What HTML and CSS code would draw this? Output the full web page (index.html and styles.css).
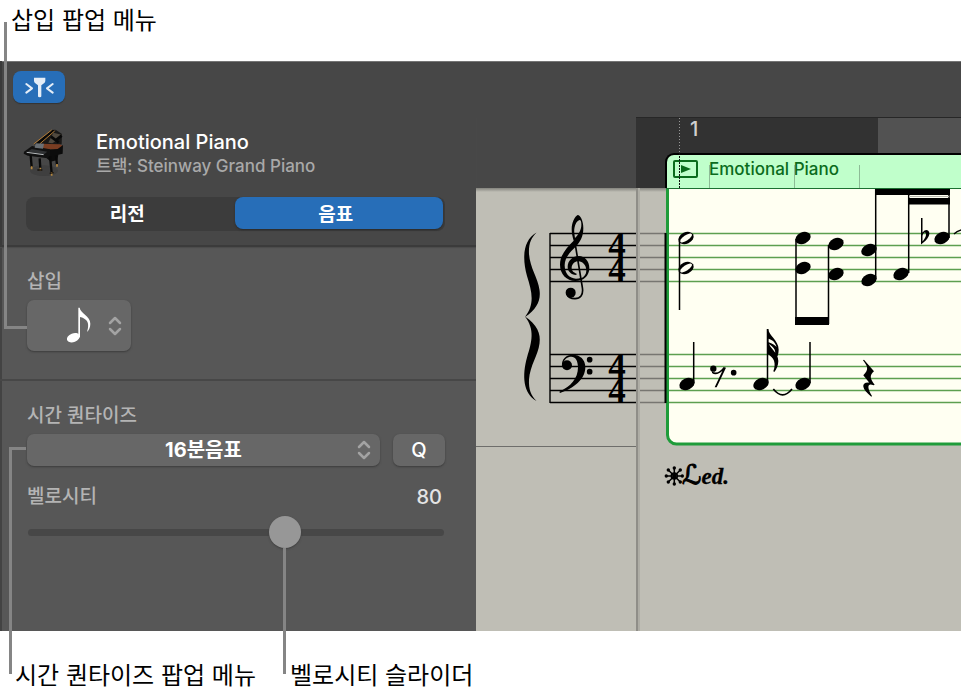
FILE: index.html
```html
<!DOCTYPE html>
<html lang="ko">
<head>
    <meta charset="UTF-8">
    <meta name="viewport" content="width=device-width, initial-scale=1.0">
    <title>악보 편집기</title>
    <link rel="stylesheet" href="styles.css">
</head>
<body>
    <div class="figure">
        <p class="caption caption-top">삽입 팝업 메뉴</p>

        <main class="app">
            <div class="toolbar">
                <button class="catch" type="button" aria-label="재생헤드 캐치">
                    <svg width="30" height="22" viewBox="0 0 90 66" fill="none" stroke="#e4edf7" stroke-width="6" stroke-linecap="round" stroke-linejoin="round">
                        <path d="M7 24l17 13-17 13M86 24L69 37l17 13"/>
                        <path d="M30 5h34v9q0 5-4 8l-8 6v33q0 3-5 3t-5-3V28l-8-6q-4-3-4-8z" fill="#e4edf7" stroke="none"/>
                    </svg>
                </button>
            </div>

            <section class="inspector">
                <div class="head">
                    <div class="track">
                        <svg class="piano" width="44" height="48" viewBox="66 387 132 144">
                            <ellipse cx="132" cy="512" rx="42" ry="16" fill="#3f3f3f"/>
                            <path d="M104 435l64-45 18 12-1 31-40 8z" fill="#191817"/>
                            <path d="M103 433l52-43 12-1-48 43z" fill="#090909"/>
                            <path d="M101 432l54-42M119 432l45-39" stroke="#b37b35" stroke-width="3"/>
                            <path d="M160 398l25 6-4 10-24 16-12-2z" fill="#50493f"/>
                            <path d="M153 410l23 17M185 407l-19 15" stroke="#080808" stroke-width="8"/>
                            <path d="M121 431l58 2 10 5-14 12-45-2z" fill="#7a3d22"/>
                            <path d="M133 449l40-2 16-12-1 26-13 3-3 16-20 5-19-17z" fill="#0c0c0c"/>
                            <path d="M72 455l24-17 54 10 1 18-8 9-60-8-12-6z" fill="#111"/>
                            <path d="M83 455l12-8 47 8-10 8z" fill="#303234"/>
                            <path d="M80 457l51 7" stroke="#b8bcbe" stroke-width="3"/>
                            <path d="M107 430l25 1-3 15-25-3z" fill="#6a7075"/>
                            <path d="M92 466l3 35M119 475l2 31M150 470l5 49M168 466l3 29" stroke="#090909" stroke-width="7"/>
                            <path d="M95 499v9M121 503v9M155 516v11M171 492v8" stroke="#b6873d" stroke-width="5"/>
                            <path d="M112 510h15M149 520l12-2" stroke="#17130e" stroke-width="4"/>
                        </svg>
                        <div>
                            <h1 class="track-title">Emotional Piano</h1>
                            <p class="track-sub">트랙: Steinway Grand Piano</p>
                        </div>
                    </div>
                    <div class="tabs">
                        <button class="tab" type="button">리전</button>
                        <button class="tab active" type="button">음표</button>
                    </div>
                </div>

                <div class="group">
                    <label class="label" for="insert">삽입</label>
                    <div class="popup popup-insert">
                        <select id="insert">
                            <option value="8" selected></option>
                        </select>
                        <svg class="popup-note" width="24" height="36" viewBox="0 0 72 108" fill="#fff">
                            <ellipse cx="19" cy="92" rx="20" ry="13" transform="rotate(-22 19 92)"/>
                            <path d="M34 2h4c2 17 32 25 32 48 0 10-4 20-10 25 5-15 6-31-6-38-6-5-12-7-15-7v61h-5z"/>
                        </svg>
                        <svg class="arrows" width="14" height="20" viewBox="0 0 14 20"><path d="M2 7l5-5 5 5M2 13l5 5 5-5"/></svg>
                    </div>
                </div>

                <div class="group group-last">
                    <label class="label" for="quantize">시간 퀀타이즈</label>
                    <div class="row">
                        <div class="popup popup-quantize">
                            <select id="quantize">
                                <option>16분음표</option>
                            </select>
                            <svg class="arrows" width="14" height="20" viewBox="0 0 14 20"><path d="M2 7l5-5 5 5M2 13l5 5 5-5"/></svg>
                        </div>
                        <button class="q" type="button">Q</button>
                    </div>
                    <div class="velocity">
                        <label class="label" for="velocity">벨로시티</label>
                        <output class="value" for="velocity">80</output>
                    </div>
                    <input class="slider" id="velocity" type="range" min="1" max="127" value="80">
                </div>
            </section>

            <section class="editor">
                <div class="timeline">
                    <div class="ruler">
                        <div class="bars">
                            <span class="bar">1</span>
                            <span class="bar-rest"></span>
                        </div>
                        <div class="region-head">
                            <svg width="26" height="20" viewBox="0 0 26 20">
                                <rect x="1" y="2" width="23" height="16" rx="1" fill="none" stroke="#0b6b1c" stroke-width="2"/>
                                <path d="M8 6l10 4-10 4z" fill="#0b6b1c"/>
                            </svg>
                            <span>Emotional Piano</span>
                            <i class="tick tick-1"></i>
                            <i class="tick tick-2"></i>
                            <i class="tick tick-3"></i>
                        </div>
                        <i class="playhead"></i>
                    </div>
                </div>

                <svg class="score" width="100%" height="443">
                    <defs>
                        <ellipse id="head" rx="8" ry="5.800" transform="rotate(-25)"/>
                        <g id="half">
                            <use href="#head"/>
                            <ellipse rx="7" ry="2.600" transform="rotate(-33)" fill="#fffff2"/>
                        </g>
                        <path id="brace" d="M60.500 44.500C47 52 46 70 51 88 56 104 59 116 49 129 61 121 65 112 63.500 102 62 90 54 80 53 66 52.500 56 55 50 60.500 44.500z"/>
                        <linearGradient id="shade" x2="0" y2="1">
                            <stop offset="0" stop-color="#83837d"/>
                            <stop offset="1" stop-color="#bfbeb5"/>
                        </linearGradient>
                    </defs>

                    <rect width="100%" height="4" fill="url(#shade)"/>

                    <!-- divider between the staff rows -->
                    <path d="M0 258.500h160" stroke="#6e6e6b"/>

                    <!-- brace, clefs and meter -->
                    <use href="#brace"/>
                    <use href="#brace" transform="matrix(1 0 0 -1 0 257.400)"/>
                    <path d="M74 45.500h86M74 57.500h86M74 69.500h86M74 81.500h86M74 93.500h86M74 166.500h86M74 178.500h86M74 190.500h86M74 202.500h86M74 214.500h86M74 45v170" stroke="#000" stroke-width="1.400"/>
                    <g transform="translate(64 12) scale(.3333)">
                        <path fill-rule="evenodd" d="M113 45C121 45 130 62 130 84 130 108 122 124 109 138 92 155 74 172 74 196 74 220 88 236 108 236 114 236 119 235 123 233L124 240C118 242 112 243 106 243 80 243 60 222 60 194 60 166 78 145 101 122 97 110 95 98 95 88 95 66 105 49 113 45zM119 60C109 62 101 80 103 100L105 114C116 104 125 88 124 72 124 64 122 60 119 60z"/>
                        <path d="M124 240C140 234 148 220 148 204 148 184 134 168 117 168 98 168 83 182 83 201 83 213 92 224 109 225L110 221C100 218 94 211 95 202 96 192 104 184 115 184 128 184 139 196 139 212 139 222 133 231 122 235z"/>
                        <path d="M104 122L127 262C131 286 120 296 105 296 94 296 84 291 81 282" fill="none" stroke="#000" stroke-width="5"/>
                        <circle cx="92" cy="278" r="15"/>
                    </g>
                    <g transform="translate(64 152) scale(.3333)">
                        <path d="M66 78C64 58 78 44 98 44 120 44 136 58 136 82 136 118 100 146 60 159L58 155C92 140 114 116 114 82 114 62 106 50 94 50 82 50 72 58 71 68z"/>
                        <circle cx="81" cy="76" r="15"/>
                        <circle cx="149" cy="59" r="8.500"/>
                        <circle cx="149" cy="95" r="8.500"/>
                    </g>
                    <text class="meter"><tspan x="141" y="69">4</tspan><tspan x="141" y="93">4</tspan></text>
                    <text class="meter"><tspan x="141" y="190">4</tspan><tspan x="141" y="214">4</tspan></text>

                    <!-- lead-in before bar 1 -->
                    <path d="M161 45.500h29M161 57.500h29M161 69.500h29M161 81.500h29M161 93.500h29M161 166.500h29M161 178.500h29M161 190.500h29M161 202.500h29M161 214.500h29" stroke="#777671" stroke-width="1.400"/>
                    <rect x="160" width="2" height="443" fill="#8f8e88"/>
                    <rect x="162" width="2" height="443" fill="#aeada5"/>

                    <!-- region -->
                    <rect class="region" x="191.500" y="-20" width="110%" height="276" rx="9"/>
                    <svg x="193" y="0" width="100%" height="240" overflow="hidden">
                        <path class="staff" d="M0 45.500h3000M0 57.500h3000M0 69.500h3000M0 81.500h3000M0 93.500h3000M0 166.500h3000M0 178.500h3000M0 190.500h3000M0 202.500h3000M0 214.500h3000"/>
                    </svg>
                    <path d="M190 .5h3000" stroke="#1b7030"/>
                    <path d="M189.500 45v170" stroke="#000" stroke-width="2"/>

                    <!-- upper voice -->
                    <use href="#half" x="210" y="50"/>
                    <use href="#half" x="210" y="80"/>
                    <use href="#head" x="327" y="50"/>
                    <use href="#head" x="327" y="80"/>
                    <use href="#head" x="360" y="56"/>
                    <use href="#head" x="360" y="86"/>
                    <use href="#head" x="393" y="62"/>
                    <use href="#head" x="393" y="92"/>
                    <use href="#head" x="425" y="86"/>
                    <use href="#head" x="466" y="50"/>
                    <path d="M203.500 51v71M320 51v85M352.500 57v79M399.700 1v90M432.700 1v84M473 1v49" stroke="#000" stroke-width="1.500"/>
                    <path d="M319 129h34v8h-34zM399 1h75v6h-75zM432 10h42v6.500h-42z"/>
                    <path d="M433 8.500h40" stroke="#b9b9b0"/>
                    <path fill-rule="evenodd" d="M445 30h1.500v14.500q3-3.500 5.500-2c3.500 3 0 9-7 14zM446.500 48v5.500c3.500-4 4.500-8 2.500-9q-2 0-2.500 3.500z"/>
                    <path d="M478 46q4-4 12-5" fill="none" stroke="#000" stroke-width="1.500"/>

                    <!-- lower voice -->
                    <use href="#head" x="211" y="196"/>
                    <use href="#head" x="285" y="196"/>
                    <use href="#head" x="327" y="196"/>
                    <path d="M217.700 154v41M291.500 141v54M334 154v41" stroke="#000" stroke-width="1.500"/>
                    <g transform="translate(184 122) scale(.3333)">
                        <circle cx="160" cy="176" r="9.500"/>
                        <path d="M156 184c12 8 25 2 35-13l7 2-28 59h-6l23-49c-10 9-22 13-31 6z"/>
                        <circle cx="221" cy="188" r="8.500"/>
                        <path d="M321 57h4c1 20 31 34 31 62 0 12-4 25-11 31l-4-1c11-24 4-38-20-50zM321 95h4c2 19 30 32 30 58 0 12-5 25-12 33l-3-2c9-25 3-42-19-53z"/>
                        <path d="M326 86c15 5 20 13 24 25-7-7-13-10-24-14z" fill="#fffff2"/>
                        <path d="M340 237q28 35 56 0" fill="none" stroke="#000" stroke-width="5"/>
                        <path d="M609 151l3-2 30 35c-14 13-12 22 2 40l-3 2c-16-8-23 2-5 32l-2 2c-30-23-32-44-6-42l-18-22c17-17 14-26-1-45z"/>
                    </g>

                    <!-- pedal mark -->
                    <g transform="translate(198.300 288)" stroke="#000" stroke-width="1.500">
                        <path d="M-8 0H8M0-8V8M-6-6L6 6M-6 6L6-6"/>
                        <circle r="3" fill="none"/>
                        <g stroke="none">
                            <circle cx="-8" r="1.700"/><circle cx="8" r="1.700"/><circle cy="-8" r="1.700"/><circle cy="8" r="1.700"/>
                            <circle cx="-6" cy="-6" r="1.700"/><circle cx="6" cy="6" r="1.700"/><circle cx="-6" cy="6" r="1.700"/><circle cx="6" cy="-6" r="1.700"/>
                        </g>
                    </g>
                    <text class="pedal" x="206" y="296"><tspan class="pedal-cap">ℒ</tspan>ed.</text>
                </svg>
            </section>
        </main>

        <div class="captions">
            <p class="caption">시간 퀀타이즈 팝업 메뉴</p>
            <p class="caption">벨로시티 슬라이더</p>
        </div>

        <!-- callout lines -->
        <i class="line line-insert"></i>
        <i class="line line-quantize"></i>
        <i class="line line-velocity"></i>
    </div>
</body>
</html>
```
FILE: styles.css
```css
* { box-sizing: border-box; }
body {
    margin: 0;
    background: #fff;
    color: #000;
    font-family: Inter, "Noto Sans CJK KR", sans-serif;
}
h1, p { margin: 0; }
button, select { font: inherit; }
svg { display: block; }

.figure { position: relative; }
.caption {
    font-family: "Noto Sans CJK KR", sans-serif;
    font-size: 24px;
    line-height: 32px;
    white-space: nowrap;
}
.caption-top { padding: 3px 11px 26px; }
.captions {
    display: grid;
    grid-template-columns: 275px 1fr;
    padding: 27px 0 4px 15px;
}

.app {
    display: grid;
    grid-template-columns: 476px 1fr;
    margin-right: 2px;
    background: #474747;
    box-shadow: inset 2px 0 #3a3a3a, inset 0 1px #757575;
}
.toolbar {
    grid-column: 1 / 3;
    padding: 10px 13px 14px;
}
.catch {
    display: flex;
    align-items: center;
    justify-content: center;
    width: 52px;
    height: 32px;
    padding: 0;
    border: 0;
    border-radius: 8px;
    background: #276eb8;
    box-shadow: 0 1px 1px #333;
}

/* inspector */
.inspector {
    background: #575757;
    box-shadow: inset 2px 0 #434343;
}
.head {
    padding: 12px 31px 14px 26px;
    background: #474747;
    border-bottom: 2px solid #3b3b3b;
    box-shadow: inset 2px 0 #3a3a3a, 0 1px 1px #4c4c4c;
}
.track {
    display: flex;
    gap: 30px;
    margin: 0 0 20px -4px;
}
.track-title {
    color: #fff;
    font-size: 20px;
    font-weight: 500;
    line-height: 26px;
}
.track-sub {
    color: #a9a9a9;
    font-size: 17px;
    font-weight: 500;
    line-height: 22px;
}
.tabs {
    display: flex;
    height: 34px;
    padding-right: 2px;
    border-radius: 8px;
    background: #3c3c3c;
}
.tab {
    flex: 1;
    height: 32px;
    padding: 0 0 2px;
    border: 0;
    border-radius: 8px;
    background: none;
    color: #fff;
    font-size: 19px;
    font-weight: 700;
}
.tab.active {
    margin-left: 6px;
    padding-right: 6px;
    background: #276eb8;
    box-shadow: 0 1px 2px #2a2a2a;
}
.group {
    padding: 23px 31px 28px 27px;
    border-bottom: 2px solid #474747;
}
.group-last {
    padding-bottom: 83px;
    border-bottom: 0;
}
.label {
    display: block;
    color: #b4b4b4;
    font-size: 19px;
    font-weight: 500;
    line-height: 24px;
}
.popup {
    position: relative;
    margin-top: 6px;
}
.popup select, .q {
    width: 100%;
    height: 32px;
    padding: 0;
    border: 0;
    border-radius: 7px;
    background: #676767;
    color: #fff;
    box-shadow: 0 1px 2px #3c3c3c;
}
.popup select {
    display: block;
    appearance: none;
    text-align: center;
    text-align-last: center;
    font-size: 20px;
    font-weight: 700;
}
.popup-insert { width: 104px; }
.popup-insert select { height: 51px; }
.popup-note {
    position: absolute;
    left: 40px;
    top: 7px;
    pointer-events: none;
}
.arrows {
    position: absolute;
    right: 9px;
    top: 50%;
    margin-top: -10px;
    fill: none;
    stroke: #a3a3a3;
    stroke-width: 2;
    stroke-linecap: round;
    stroke-linejoin: round;
    pointer-events: none;
}
.row {
    display: flex;
    align-items: flex-end;
    gap: 13px;
}
.popup-quantize { flex: 1; }
.popup .arrows { stroke-width: 2.5; }
.row .q {
    width: 52px;
    font-size: 20px;
    font-weight: 500;
}
.velocity {
    display: flex;
    justify-content: space-between;
    margin: 19px 3px 7px 0;
}
.value {
    color: #e4e4e4;
    font-size: 20px;
    font-weight: 500;
    line-height: 24px;
}
.slider {
    appearance: none;
    display: block;
    width: calc(100% - 2px);
    height: 32px;
    margin: 0 0 0 1px;
    background: none;
}
.slider::-webkit-slider-runnable-track {
    height: 7px;
    border-radius: 4px;
    background: #474747;
}
.slider::-webkit-slider-thumb {
    appearance: none;
    width: 32px;
    height: 32px;
    margin-top: -13px;
    border-radius: 50%;
    background: #979797;
    box-shadow: 0 1px 2px #3f3f3f;
}

/* editor */
.editor { min-width: 0; overflow: hidden; }
.timeline { padding-left: 160px; }
.ruler {
    position: relative;
    background: #323232;
    border-top: 1px solid #272727;
}
.bars {
    display: flex;
    height: 35px;
}
.bar {
    width: 242px;
    padding-left: 54px;
    color: #d0d0d0;
    font-size: 20px;
    font-weight: 500;
    line-height: 22px;
}
.bar-rest {
    flex: 1;
    background: #525252;
}
.region-head {
    position: relative;
    display: flex;
    gap: 10px;
    height: 35px;
    margin-left: 29px;
    padding: 4px 0 0 6px;
    border: solid #000;
    border-width: 2px 0 0 2px;
    border-radius: 9px 0 0 0;
    background: #c0ffcb;
    color: #0b6b1c;
    font-size: 17px;
    font-weight: 500;
    line-height: 20px;
    white-space: nowrap;
}
.tick {
    position: absolute;
    bottom: 0;
    width: 1px;
    height: 23px;
    background: #8dbb96;
}
.tick-1 { left: 42px; }
.tick-2 { left: 127px; }
.tick-3 { left: 192px; }
.playhead {
    position: absolute;
    left: 43px;
    top: 0;
    bottom: 0;
    width: 1px;
    background:
        repeating-linear-gradient(#111 0 2px, transparent 2px 3px) 0 35px / 1px 35px no-repeat,
        repeating-linear-gradient(#999 0 1px, transparent 1px 3px) 0 0 / 1px 35px no-repeat;
}
.score { background: #bfbeb5; }
.region {
    fill: #fffff2;
    stroke: #1f9c3a;
    stroke-width: 3;
}
.staff {
    stroke: #5d9f50;
    stroke-width: 1.5;
}
.meter {
    font: bold 35px "Liberation Serif", serif;
    text-anchor: middle;
}
.pedal {
    font: italic bold 23px "Liberation Serif", serif;
    stroke: #000;
    stroke-width: .3;
}
.pedal-cap {
    font: 27px "DejaVu Serif", "DejaVu Sans", serif;
    stroke-width: 1;
}

/* callouts */
.line {
    position: absolute;
    border: 0 solid #858585;
}
.line-insert {
    left: 4px;
    top: 22px;
    width: 23px;
    height: 307px;
    border-width: 0 0 3px 3px;
}
.line-quantize {
    left: 9px;
    top: 447px;
    width: 17px;
    height: 227px;
    border-width: 3px 0 0 3px;
}
.line-velocity {
    left: 283px;
    top: 548px;
    height: 126px;
    border-left-width: 3px;
}
```
